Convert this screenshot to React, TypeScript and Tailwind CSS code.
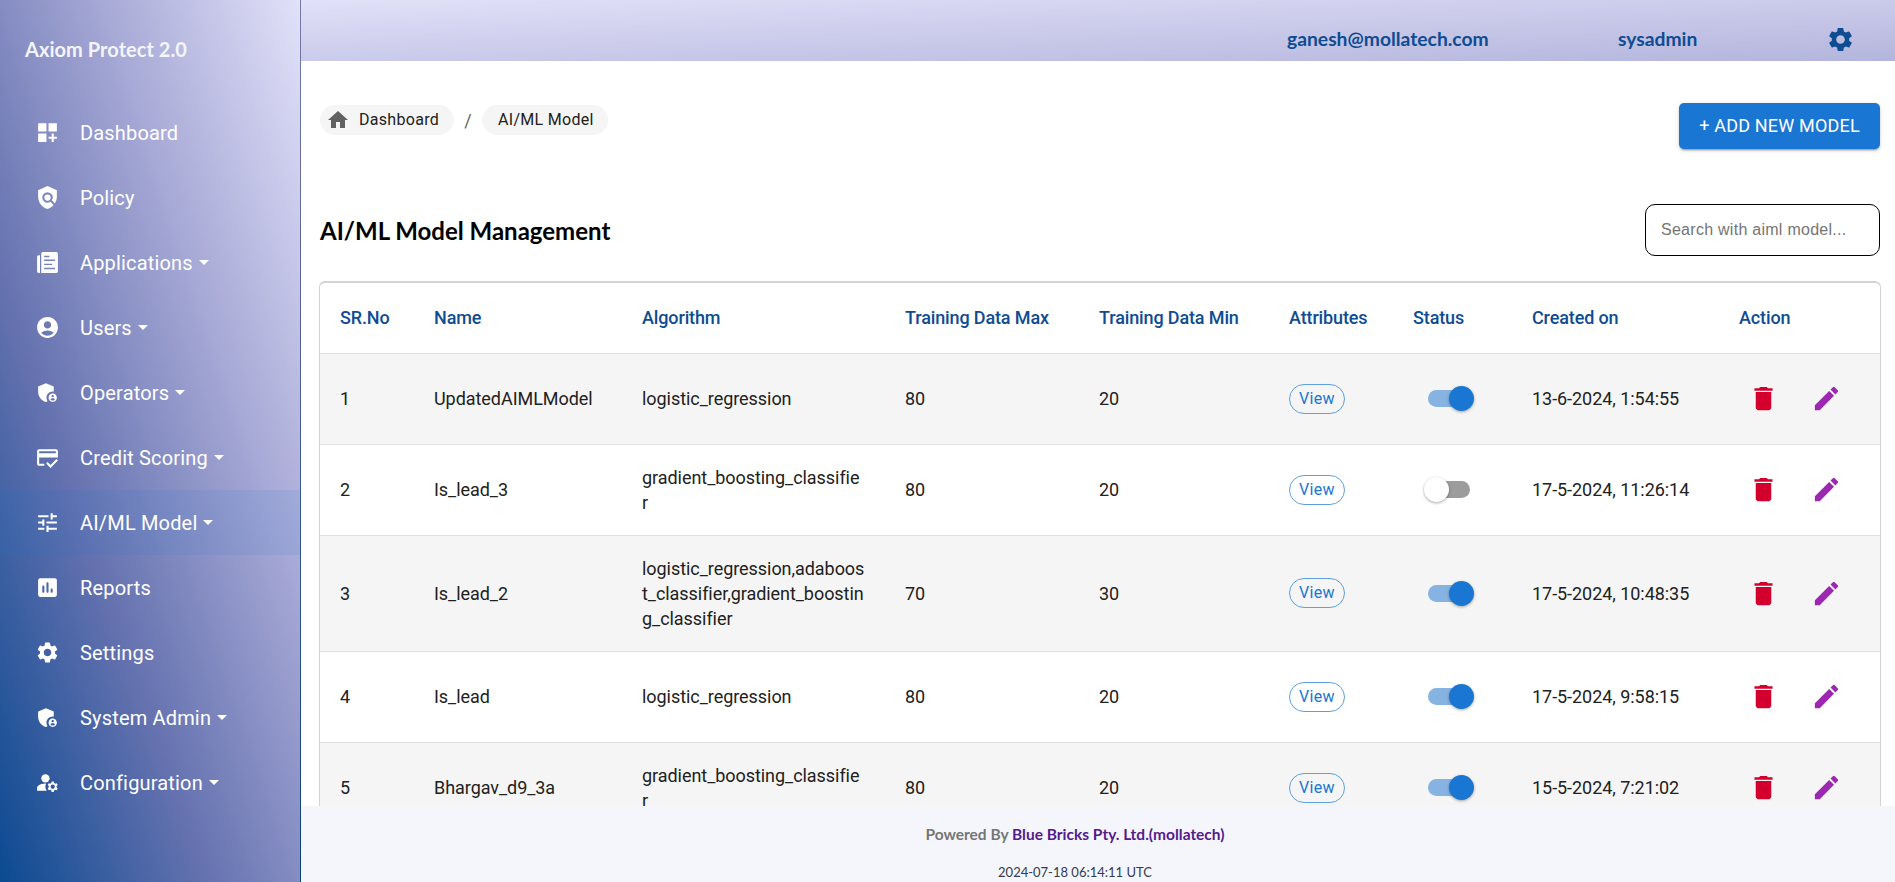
import React from "react";
import {
  MdDashboardCustomize, MdPolicy, MdAccountCircle, MdAdminPanelSettings,
  MdOutlineCreditScore, MdTune, MdSettings, MdManageAccounts, MdDelete, MdEdit, MdHome,
} from "react-icons/md";

function NewspaperIcon({ className }: { className?: string }) {
  return (
    <svg viewBox="0 0 24 24" fill="currentColor" className={className}>
      <path d="M20.500 2H7.500A1.500 1.500 0 0 0 6 3.500V22h14.500a1.500 1.500 0 0 0 1.500-1.500v-17A1.500 1.500 0 0 0 20.500 2zM4.800 5H3.500A1.500 1.500 0 0 0 2 6.500v14A1.500 1.500 0 0 0 3.500 22h1.300zM8.800 5.500h5v1.400h-5zm0 3.600h10.400v1.400H8.800zm0 4h7.700v1.400H8.800zm0 4h10.400v1.400H8.800z" fillRule="evenodd" />
    </svg>
  );
}

function ChartIcon({ className }: { className?: string }) {
  return (
    <svg viewBox="0 0 24 24" fill="currentColor" className={className}>
      <path fillRule="evenodd" d="M19 3H5c-1.100 0-2 .9-2 2v14c0 1.100.9 2 2 2h14c1.100 0 2-.9 2-2V5c0-1.100-.9-2-2-2zM8 17c-.550 0-1-.450-1-1v-5c0-.550.450-1 1-1s1 .450 1 1v5c0 .550-.450 1-1 1zm4 0c-.550 0-1-.450-1-1V8c0-.550.450-1 1-1s1 .450 1 1v8c0 .550-.450 1-1 1zm4 0c-.550 0-1-.450-1-1v-2c0-.550.450-1 1-1s1 .450 1 1v2c0 .550-.450 1-1 1z" />
    </svg>
  );
}

const nav = [
  { label: "Dashboard", Icon: MdDashboardCustomize },
  { label: "Policy", Icon: MdPolicy },
  { label: "Applications", Icon: NewspaperIcon, menu: true },
  { label: "Users", Icon: MdAccountCircle, menu: true },
  { label: "Operators", Icon: MdAdminPanelSettings, menu: true },
  { label: "Credit Scoring", Icon: MdOutlineCreditScore, menu: true },
  { label: "AI/ML Model", Icon: MdTune, menu: true, active: true },
  { label: "Reports", Icon: ChartIcon },
  { label: "Settings", Icon: MdSettings },
  { label: "System Admin", Icon: MdAdminPanelSettings, menu: true },
  { label: "Configuration", Icon: MdManageAccounts, menu: true },
];

const rows = [
  { name: "UpdatedAIMLModel", algo: "logistic_regression", max: 80, min: 20, on: true, date: "13-6-2024, 1:54:55", h: "h-[91px]" },
  { name: "Is_lead_3", algo: "gradient_boosting_classifie\nr", max: 80, min: 20, on: false, date: "17-5-2024, 11:26:14", h: "h-[91px]" },
  { name: "Is_lead_2", algo: "logistic_regression,adaboos\nt_classifier,gradient_boostin\ng_classifier", max: 70, min: 30, on: true, date: "17-5-2024, 10:48:35", h: "h-[116px]" },
  { name: "Is_lead", algo: "logistic_regression", max: 80, min: 20, on: true, date: "17-5-2024, 9:58:15", h: "h-[91px]" },
  { name: "Bhargav_d9_3a", algo: "gradient_boosting_classifie\nr", max: 80, min: 20, on: true, date: "15-5-2024, 7:21:02", h: "h-[91px]" },
];

const cols = "grid grid-cols-[94px_208px_263px_194px_190px_124px_119px_207px_1fr] items-center";

function Toggle({ on }: { on: boolean }) {
  return (
    <div className="ml-[15px] flex h-[25px] w-[46px] items-center">
      <div className={on ? "flex h-[17px] w-[42px] items-center justify-end rounded-full bg-[#86b3e2]" : "ml-1 flex h-[17px] w-[38px] items-center rounded-full bg-[#9c9c9c]"}>
        <div className={on ? "-mr-1 size-[25px] shrink-0 rounded-full bg-[#1976d2] shadow-[0_1px_3px_rgba(0,0,0,0.35)]" : "-ml-2 size-[25px] shrink-0 rounded-full bg-white shadow-[0_1px_3px_rgba(0,0,0,0.35)]"} />
      </div>
    </div>
  );
}

export default function App() {
  return (
    <div className="flex h-[882px] w-full overflow-hidden bg-white font-['Roboto',sans-serif] text-[#212121]">
      <aside className="flex w-[301px] shrink-0 flex-col border-r border-black/12 bg-[linear-gradient(to_top_right,#0b4a91_0%,#6270ae_33%,#a7a9d6_67%,#e1e1f9_100%)]">
        <div className="flex h-[100px] items-center pb-[2px] pl-[25px]">
          <span className="font-['Lato',sans-serif] text-xl font-bold tracking-[0.05px] text-[#f4f5fb]">Axiom Protect 2.0</span>
        </div>
        <nav className="flex flex-col">
          {nav.map(({ label, Icon, menu, active }) => (
            <div key={label} className={active ? "flex h-[65px] items-center bg-[#1976d2]/10 pl-[35px] text-white" : "flex h-[65px] items-center pl-[35px] text-white"}>
              <Icon className="mr-5 size-[25px] shrink-0" />
              <span className="text-[20px] tracking-[0.17px]">{label}</span>
              {menu && <span className="ml-[6px] border-x-[5px] border-t-[5px] border-x-transparent border-t-white" />}
            </div>
          ))}
        </nav>
      </aside>
      <div className="flex min-w-0 flex-1 flex-col">
        <header className="flex h-[61px] shrink-0 items-center bg-[linear-gradient(to_bottom_right,#e1e1f9,#b4b5dc)] pt-[18px] font-['Lato',sans-serif] text-[19.3px] font-bold text-[#0f4c92]">
          <span className="ml-[986px] w-[331px]">ganesh@mollatech.com</span>
          <span className="w-[208px]">sysadmin</span>
          <MdSettings className="size-[29px]" />
        </header>
        <main className="flex min-h-0 flex-1 flex-col overflow-hidden pr-[15px] pl-[18px]">
          <div className="flex items-start justify-between pt-[42px]">
            <div className="flex items-center pt-[2px] text-base tracking-[0.3px]">
              <span className="ml-px flex h-[30px] w-[134px] items-center rounded-full bg-[#f5f5f5] pl-[6px]">
                <MdHome className="mr-[9px] size-6 text-[#616161]" />Dashboard
              </span>
              <span className="w-7 text-center text-[18px] text-[#666]">/</span>
              <span className="flex h-[30px] w-[126px] items-center rounded-full bg-[#f5f5f5] pl-4">AI/ML Model</span>
            </div>
            <button className="h-[46px] w-[201px] rounded-[5px] bg-[#1976d2] pb-[2px] text-[18px] tracking-[0.18px] text-white shadow-[0_3px_1px_-2px_rgba(0,0,0,0.2),0_2px_2px_rgba(0,0,0,0.14),0_1px_5px_rgba(0,0,0,0.12)]">+ ADD NEW MODEL</button>
          </div>
          <div className="mt-[55px] flex h-[52px] shrink-0 items-center justify-between">
            <h1 className="ml-px pt-px font-['Lato',sans-serif] text-[24px] font-bold text-black">AI/ML Model Management</h1>
            <div className="flex h-[52px] w-[235px] items-center rounded-[10px] border border-black pl-[15px] font-['Liberation_Sans',sans-serif] text-base tracking-[0.27px] text-[#757575]">Search with aiml model...</div>
          </div>
          <div className="mt-[25px] -mr-px shrink-0 rounded-t-[6px] border border-t-2 border-[#d3d3d3] text-[18px] tracking-[-0.05px]">
            <div className={`${cols} h-[70px] pb-px pl-5 font-medium tracking-[-0.13px] text-[#0f4c92]`}>
              <span>SR.No</span><span>Name</span><span>Algorithm</span><span>Training Data Max</span><span>Training Data Min</span><span>Attributes</span><span>Status</span><span>Created on</span><span>Action</span>
            </div>
            {rows.map((r, i) => (
              <div key={r.name} className={`${cols} ${r.h} ${i % 2 ? "bg-white" : "bg-[#f5f5f5]"} border-t border-[#e0e0e0] pb-px pl-5`}>
                <span>{i + 1}</span>
                <span>{r.name}</span>
                <span className="leading-[25px] whitespace-pre-line">{r.algo}</span>
                <span>{r.max}</span>
                <span>{r.min}</span>
                <span className="flex h-[30px] w-[56px] items-center justify-center rounded-full border border-[#5e9fe0] text-base tracking-[0.3px] text-[#1976d2]">View</span>
                <Toggle on={r.on} />
                <span>{r.date}</span>
                <span className="flex items-center pl-[9px]"><MdDelete className="mr-8 size-[31px] text-[#d3002d]" /><MdEdit className="size-[31px] text-[#9c27b0]" /></span>
              </div>
            ))}
          </div>
        </main>
        <footer className="flex h-[76px] shrink-0 flex-col items-center bg-[#f4f6fb] pt-[18px] pr-[46px] font-['Lato',sans-serif]">
          <p className="text-[15.5px] leading-5 font-bold text-[#757575]">Powered By <span className="text-[#551a8b]">Blue Bricks Pty. Ltd.(mollatech)</span></p>
          <p className="mt-[18px] text-[13px] leading-5 text-[#333b4d]">2024-07-18 06:14:11 UTC</p>
        </footer>
      </div>
    </div>
  );
}
